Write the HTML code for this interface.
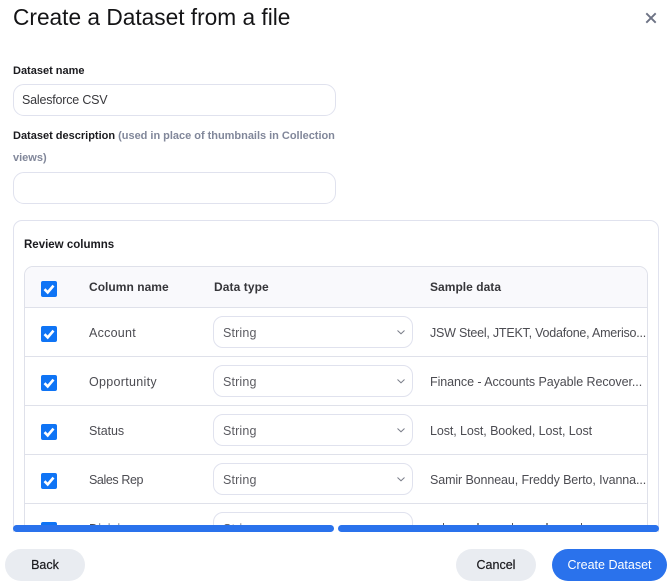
<!DOCTYPE html>
<html><head><meta charset="utf-8">
<style>
html,body{margin:0;padding:0;background:#fff;width:672px;height:586px;overflow:hidden}
body{font-family:"Liberation Sans",sans-serif;position:relative;color:#4c4c52}
.a{position:absolute;white-space:nowrap}
.lb{font-size:11px;font-weight:700;color:#1b1b1f;line-height:14px}
.in{position:absolute;left:13px;width:321px;height:30px;border:1px solid #e0e2ee;border-radius:11px;background:#fff}
.cell{font-size:12.5px;letter-spacing:.25px;line-height:16px;color:#4c4c52}
.hd{font-size:12px;font-weight:700;color:#36363a;line-height:16px}
.cb{position:absolute;left:41px;width:16px;height:16px;background:#0f74f5;border-radius:2px}
.cb svg{display:block}
.sel{position:absolute;left:213px;width:198px;height:30px;border:1px solid #e0e2ee;border-radius:10px;background:#fff}
.sel span{position:absolute;left:9px;top:8px;font-size:12.5px;letter-spacing:.15px;line-height:16px;color:#5c5c62}
.sel svg{position:absolute;left:182px;top:12px}
.ln{position:absolute;left:25px;width:622px;height:1px;background:#dfe1ea}
.btn{position:absolute;top:549px;height:32px;border-radius:16px;background:#e9ecf1;color:#1b1b1f;font-size:12.5px;line-height:32px;text-align:center;-webkit-text-stroke:.2px #1b1b1f}
</style></head><body>
<div class="a" style="left:13px;top:3px;font-size:22.7px;line-height:28px;color:#141416">Create a Dataset from a file</div>
<svg class="a" style="left:644px;top:11px" width="14" height="14" viewBox="0 0 14 14"><path d="M2.3 2.3L11.7 11.7M11.7 2.3L2.3 11.7" stroke="#6d7385" stroke-width="1.9" fill="none"/></svg>

<div class="a lb" style="left:13px;top:64px">Dataset name</div>
<div class="in" style="top:84px"></div>
<div class="a" style="left:22px;top:92px;font-size:12.5px;line-height:16px;color:#38383c;letter-spacing:-.2px">Salesforce CSV</div>
<div class="a lb" style="left:13px;top:129px">Dataset description <span style="color:#81879a;letter-spacing:-.02px">(used in place of thumbnails in Collection</span></div>
<div class="a lb" style="left:13px;top:151px;color:#81879a">views)</div>
<div class="in" style="top:172px"></div>

<div class="a" style="left:13px;top:220px;width:644px;height:340px;border:1px solid #e0e2ee;border-radius:9px;box-sizing:content-box"></div>
<div class="a lb" style="left:24px;top:238px;font-size:11.5px">Review columns</div>

<div class="a" style="left:24px;top:266px;width:622px;height:300px;border:1px solid #dfe1ea;border-radius:9px 9px 0 0"></div>
<div class="a" style="left:25px;top:267px;width:622px;height:40px;background:#f9f9fc;border-radius:8px 8px 0 0"></div>
<div class="ln" style="top:307px"></div>
<div class="ln" style="top:356px"></div>
<div class="ln" style="top:405px"></div>
<div class="ln" style="top:454px"></div>
<div class="ln" style="top:503px"></div>

<div class="cb" style="top:281px"><svg width="16" height="16" viewBox="0 0 16 16"><path d="M3.5 8.2L6.7 11.4L12.5 4.6" stroke="#fff" stroke-width="2.6" fill="none"/></svg></div>
<div class="cb" style="top:326px"><svg width="16" height="16" viewBox="0 0 16 16"><path d="M3.5 8.2L6.7 11.4L12.5 4.6" stroke="#fff" stroke-width="2.6" fill="none"/></svg></div>
<div class="cb" style="top:375px"><svg width="16" height="16" viewBox="0 0 16 16"><path d="M3.5 8.2L6.7 11.4L12.5 4.6" stroke="#fff" stroke-width="2.6" fill="none"/></svg></div>
<div class="cb" style="top:424px"><svg width="16" height="16" viewBox="0 0 16 16"><path d="M3.5 8.2L6.7 11.4L12.5 4.6" stroke="#fff" stroke-width="2.6" fill="none"/></svg></div>
<div class="cb" style="top:473px"><svg width="16" height="16" viewBox="0 0 16 16"><path d="M3.5 8.2L6.7 11.4L12.5 4.6" stroke="#fff" stroke-width="2.6" fill="none"/></svg></div>
<div class="cb" style="top:522px"></div>

<div class="a hd" style="left:89px;top:279px;letter-spacing:.03px">Column name</div>
<div class="a hd" style="left:214px;top:279px;letter-spacing:.08px">Data type</div>
<div class="a hd" style="left:430px;top:279px;letter-spacing:.03px">Sample data</div>

<div class="a cell" style="left:89px;top:325px">Account</div>
<div class="a cell" style="left:89px;top:374px;letter-spacing:.3px">Opportunity</div>
<div class="a cell" style="left:89px;top:423px;letter-spacing:-.05px">Status</div>
<div class="a cell" style="left:89px;top:472px;letter-spacing:-.4px">Sales Rep</div>
<div class="a cell" style="left:89px;top:521px">Division</div>

<div class="sel" style="top:316px"><span>String</span><svg width="10" height="7" viewBox="0 0 10 7"><path d="M1.5 1.5L5 4.8L8.5 1.5" stroke="#7a7e89" stroke-width="1" fill="none"/></svg></div>
<div class="sel" style="top:365px"><span>String</span><svg width="10" height="7" viewBox="0 0 10 7"><path d="M1.5 1.5L5 4.8L8.5 1.5" stroke="#7a7e89" stroke-width="1" fill="none"/></svg></div>
<div class="sel" style="top:414px"><span>String</span><svg width="10" height="7" viewBox="0 0 10 7"><path d="M1.5 1.5L5 4.8L8.5 1.5" stroke="#7a7e89" stroke-width="1" fill="none"/></svg></div>
<div class="sel" style="top:463px"><span>String</span><svg width="10" height="7" viewBox="0 0 10 7"><path d="M1.5 1.5L5 4.8L8.5 1.5" stroke="#7a7e89" stroke-width="1" fill="none"/></svg></div>
<div class="sel" style="top:512px"><span>String</span></div>

<div class="a cell" style="left:430px;top:325px;letter-spacing:-.22px">JSW Steel, JTEKT, Vodafone, Ameriso...</div>
<div class="a cell" style="left:430px;top:374px;letter-spacing:-.07px">Finance - Accounts Payable Recover...</div>
<div class="a cell" style="left:430px;top:423px;letter-spacing:-.09px">Lost, Lost, Booked, Lost, Lost</div>
<div class="a cell" style="left:430px;top:472px;letter-spacing:-.11px">Samir Bonneau, Freddy Berto, Ivanna...</div>
<div class="a" style="left:443px;top:523px;width:1px;height:3px;background:#555"></div>
<div class="a" style="left:477px;top:523px;width:2px;height:3px;background:#888"></div>
<div class="a" style="left:512px;top:523px;width:1px;height:3px;background:#555"></div>
<div class="a" style="left:546px;top:523px;width:2px;height:3px;background:#888"></div>
<div class="a" style="left:581px;top:523px;width:1px;height:3px;background:#555"></div>

<div class="a" style="left:0;top:532px;width:672px;height:54px;background:#fff"></div>
<div class="a" style="left:13px;top:525px;width:321px;height:7px;background:#2a72ec;border-radius:3.5px"></div>
<div class="a" style="left:338px;top:525px;width:321px;height:7px;background:#2a72ec;border-radius:3.5px"></div>

<div class="btn" style="left:5px;width:80px">Back</div>
<div class="btn" style="left:456px;width:80px">Cancel</div>
<div class="btn" style="left:552px;width:115px;background:#2a72ec;color:#fff;-webkit-text-stroke:0">Create Dataset</div>
</body></html>
